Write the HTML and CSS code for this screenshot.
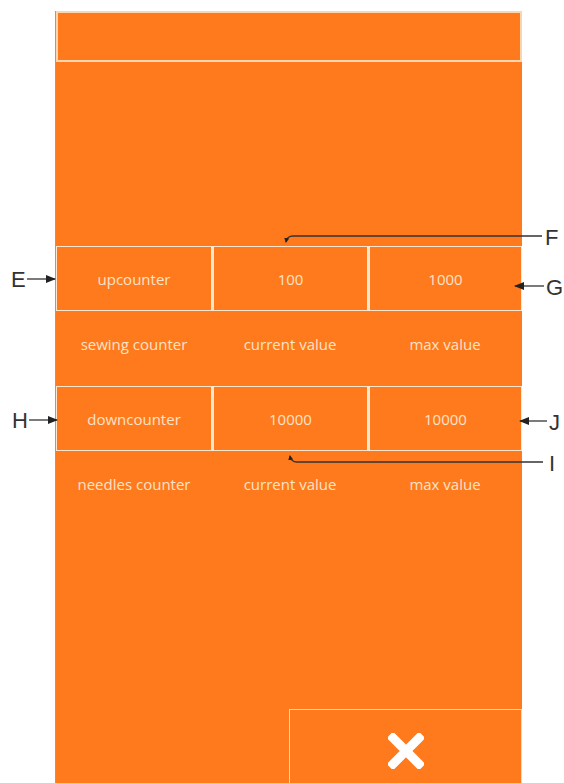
FILE: index.html
```html
<!DOCTYPE html>
<html lang="en">
<head>
  <meta charset="UTF-8">
  <title>Counter settings</title>
  <link rel="stylesheet" href="styles.css">
</head>
<body>
  <div class="page">
    <div class="panel">
      <div class="header"></div>

      <div class="counter-row first">
        <div class="cell">upcounter</div>
        <div class="cell">100</div>
        <div class="cell">1000</div>
      </div>
      <div class="label-row">
        <span>sewing counter</span>
        <span>current value</span>
        <span>max value</span>
      </div>

      <div class="counter-row">
        <div class="cell">downcounter</div>
        <div class="cell">10000</div>
        <div class="cell">10000</div>
      </div>
      <div class="label-row">
        <span>needles counter</span>
        <span>current value</span>
        <span>max value</span>
      </div>

      <div class="footer">
        <button class="close-btn" type="button" aria-label="close">
          <svg width="36" height="36" viewBox="0 0 36 36">
            <path d="M5 5 L31 31 M31 5 L5 31" stroke="#fff" stroke-width="9" stroke-linecap="square"/>
          </svg>
        </button>
      </div>
    </div>

    <!-- callouts -->
    <svg class="callouts" width="564" height="783" viewBox="0 0 564 783">
      <defs>
        <marker id="head" markerWidth="10" markerHeight="8" refX="9" refY="4" orient="auto" markerUnits="userSpaceOnUse">
          <path d="M0 0 L10 4 L0 8 Z" fill="#222"/>
        </marker>
        <marker id="small" markerWidth="5" markerHeight="5" refX="4" refY="2.5" orient="auto" markerUnits="userSpaceOnUse">
          <path d="M0 0 L5 2.5 L0 5 Z" fill="#222"/>
        </marker>
      </defs>
      <g stroke="#333" stroke-width="1.3" fill="none">
        <line x1="27" y1="279" x2="55" y2="279" marker-end="url(#head)"/>
        <line x1="29" y1="420" x2="57" y2="420" marker-end="url(#head)"/>
        <line x1="544" y1="286" x2="515" y2="286" marker-end="url(#head)"/>
        <line x1="547" y1="421" x2="520" y2="421" marker-end="url(#head)"/>
        <path d="M542 236 L293 236 Q287 236 286 242" marker-end="url(#small)"/>
        <path d="M543 462 L297 462 Q291 462 290 456" marker-end="url(#small)"/>
      </g>
      <g class="tag">
        <text x="11" y="287">E</text>
        <text x="12" y="428">H</text>
        <text x="545" y="245">F</text>
        <text x="546" y="295">G</text>
        <text x="549" y="430">J</text>
        <text x="549" y="471">I</text>
      </g>
    </svg>
  </div>
</body>
</html>
```

FILE: styles.css
```css
body {
  margin: 0;
  background: #ffffff;
  font-family: "Open Sans", "Liberation Sans", sans-serif;
}
.page {
  position: relative;
  width: 564px;
  height: 783px;
  overflow: hidden;
}
.panel {
  margin: 11px 0 0 55px;
  width: 467px;
  height: 772px;
  background: #fe7a1d;
  border-left: 1px solid #5cbf9c;
  box-sizing: border-box;
  overflow: hidden;
}
.header {
  height: 51px;
  border: 2px solid #fbd6b0;
  box-sizing: border-box;
}
.counter-row {
  display: grid;
  grid-template-columns: 156px 156px 1fr;
  height: 65px;
}
.counter-row.first {
  margin-top: 184px;
}
.cell {
  display: flex;
  align-items: center;
  justify-content: center;
  border: 1px solid #fde6cc;
  color: #fde3c8;
  font-size: 15px;
  font-weight: 500;
}
.cell + .cell {
  border-left-width: 2px;
}
.label-row {
  display: grid;
  grid-template-columns: 156px 156px 1fr;
  height: 75px;
  padding-top: 24px;
  box-sizing: border-box;
  color: #fde3c8;
  font-size: 15px;
  font-weight: 500;
  line-height: 18px;
  text-align: center;
}
.footer {
  display: flex;
  justify-content: flex-end;
  margin-top: 183px;
}
.close-btn {
  width: 233px;
  height: 84px;
  background: transparent;
  border: 1px solid #fbd6b0;
  display: flex;
  align-items: center;
  justify-content: center;
  padding: 0;
  cursor: pointer;
}
.callouts {
  position: absolute;
  left: 0;
  top: 0;
}
.tag text {
  font-family: "Liberation Sans", Arial, sans-serif;
  font-size: 22px;
  fill: #333;
}
```
